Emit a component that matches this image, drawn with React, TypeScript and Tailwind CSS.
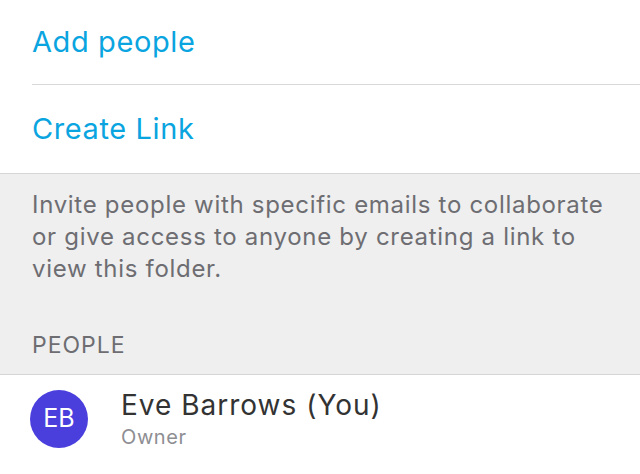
export default function App() {
  return (
    <div className="w-[640px] h-[474px] overflow-hidden bg-white font-['Inter','Liberation_Sans',sans-serif]">
      <div className="pl-8">
        <div className="h-[85px] flex items-center border-b border-[#d9d9d9]">
          <span className="text-[29px] text-[#0aa5e0] tracking-[0.6px]">Add people</span>
        </div>
        <div className="h-[88px] flex items-center">
          <span className="text-[29px] text-[#0aa5e0] tracking-[0.6px]">Create Link</span>
        </div>
      </div>
      <div className="bg-[#efefef] border-y border-[#d6d6d6] px-8">
        <p className="pt-[15px] text-[24px] leading-[32px] tracking-[0.7px] text-[#6d6d72]">
          Invite people with specific emails to collaborate or give access to anyone by creating a link to view this folder.
        </p>
        <div className="pt-[46px] pb-[15px] text-[23px] leading-[28px] tracking-[1px] text-[#6d6d72]">PEOPLE</div>
      </div>
      <div className="flex items-center pl-[30px] pt-[12px]">
        <div className="w-[58px] h-[58px] rounded-full bg-[#4a3fdd] flex items-center justify-center text-white text-[25px]">
          EB
        </div>
        <div className="ml-[33px] flex flex-col">
          <span className="text-[28px] leading-[36px] tracking-[1px] text-[#333333]">Eve Barrows (You)</span>
          <span className="text-[20px] leading-[28px] tracking-[0.6px] text-[#8e8e93]">Owner</span>
        </div>
      </div>
    </div>
  );
}
